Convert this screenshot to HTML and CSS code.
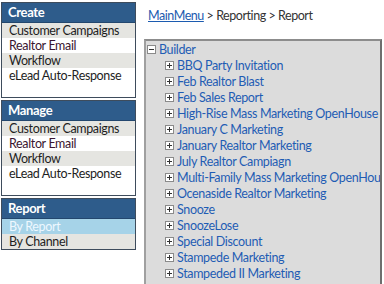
FILE: index.html
```html
<!DOCTYPE html>
<html lang="en">
<head>
  <meta charset="UTF-8">
  <title>Report</title>
  <link rel="stylesheet" href="styles.css">
</head>
<body>
  <div class="page">
    <div class="sidebar">
      <div class="box">
        <div class="box-head">Create</div>
        <div class="row alt">Customer Campaigns</div>
        <div class="row visited">Realtor Email</div>
        <div class="row alt">Workflow</div>
        <div class="row">eLead Auto-Response</div>
      </div>
      <div class="box">
        <div class="box-head">Manage</div>
        <div class="row alt">Customer Campaigns</div>
        <div class="row visited">Realtor Email</div>
        <div class="row alt">Workflow</div>
        <div class="row">eLead Auto-Response</div>
      </div>
      <div class="box short">
        <div class="box-head">Report</div>
        <div class="row selected">By Report</div>
        <div class="row alt">By Channel</div>
      </div>
    </div>

    <div class="main">
      <div class="crumbs"><a href="#">MainMenu</a> &gt; Reporting &gt; Report</div>
      <div class="tree">
        <div class="node root"><svg class="tog" viewBox="0 0 9 9"><rect x="0.5" y="0.5" width="8" height="8" fill="#fff" stroke="#8a8a8a"/><path d="M2 4.5h5" stroke="#333"/></svg>Builder</div>
        <div class="node"><svg class="tog" viewBox="0 0 9 9"><rect x="0.5" y="0.5" width="8" height="8" fill="#fff" stroke="#8a8a8a"/><path d="M2 4.5h5M4.5 2v5" stroke="#333"/></svg>BBQ Party Invitation</div>
        <div class="node"><svg class="tog" viewBox="0 0 9 9"><rect x="0.5" y="0.5" width="8" height="8" fill="#fff" stroke="#8a8a8a"/><path d="M2 4.5h5M4.5 2v5" stroke="#333"/></svg>Feb Realtor Blast</div>
        <div class="node"><svg class="tog" viewBox="0 0 9 9"><rect x="0.5" y="0.5" width="8" height="8" fill="#fff" stroke="#8a8a8a"/><path d="M2 4.5h5M4.5 2v5" stroke="#333"/></svg>Feb Sales Report</div>
        <div class="node"><svg class="tog" viewBox="0 0 9 9"><rect x="0.5" y="0.5" width="8" height="8" fill="#fff" stroke="#8a8a8a"/><path d="M2 4.5h5M4.5 2v5" stroke="#333"/></svg>High-Rise Mass Marketing OpenHouse</div>
        <div class="node"><svg class="tog" viewBox="0 0 9 9"><rect x="0.5" y="0.5" width="8" height="8" fill="#fff" stroke="#8a8a8a"/><path d="M2 4.5h5M4.5 2v5" stroke="#333"/></svg>January C Marketing</div>
        <div class="node"><svg class="tog" viewBox="0 0 9 9"><rect x="0.5" y="0.5" width="8" height="8" fill="#fff" stroke="#8a8a8a"/><path d="M2 4.5h5M4.5 2v5" stroke="#333"/></svg>January Realtor Marketing</div>
        <div class="node"><svg class="tog" viewBox="0 0 9 9"><rect x="0.5" y="0.5" width="8" height="8" fill="#fff" stroke="#8a8a8a"/><path d="M2 4.5h5M4.5 2v5" stroke="#333"/></svg>July Realtor Campiagn</div>
        <div class="node"><svg class="tog" viewBox="0 0 9 9"><rect x="0.5" y="0.5" width="8" height="8" fill="#fff" stroke="#8a8a8a"/><path d="M2 4.5h5M4.5 2v5" stroke="#333"/></svg>Multi-Family Mass Marketing OpenHouse</div>
        <div class="node"><svg class="tog" viewBox="0 0 9 9"><rect x="0.5" y="0.5" width="8" height="8" fill="#fff" stroke="#8a8a8a"/><path d="M2 4.5h5M4.5 2v5" stroke="#333"/></svg>Ocenaside Realtor Marketing</div>
        <div class="node"><svg class="tog" viewBox="0 0 9 9"><rect x="0.5" y="0.5" width="8" height="8" fill="#fff" stroke="#8a8a8a"/><path d="M2 4.5h5M4.5 2v5" stroke="#333"/></svg>Snooze</div>
        <div class="node"><svg class="tog" viewBox="0 0 9 9"><rect x="0.5" y="0.5" width="8" height="8" fill="#fff" stroke="#8a8a8a"/><path d="M2 4.5h5M4.5 2v5" stroke="#333"/></svg>SnoozeLose</div>
        <div class="node"><svg class="tog" viewBox="0 0 9 9"><rect x="0.5" y="0.5" width="8" height="8" fill="#fff" stroke="#8a8a8a"/><path d="M2 4.5h5M4.5 2v5" stroke="#333"/></svg>Special Discount</div>
        <div class="node"><svg class="tog" viewBox="0 0 9 9"><rect x="0.5" y="0.5" width="8" height="8" fill="#fff" stroke="#8a8a8a"/><path d="M2 4.5h5M4.5 2v5" stroke="#333"/></svg>Stampede Marketing</div>
        <div class="node"><svg class="tog" viewBox="0 0 9 9"><rect x="0.5" y="0.5" width="8" height="8" fill="#fff" stroke="#8a8a8a"/><path d="M2 4.5h5M4.5 2v5" stroke="#333"/></svg>Stampeded II Marketing</div>
      </div>
    </div>
  </div>
</body>
</html>
```

FILE: styles.css
```css
* {
  box-sizing: border-box;
}

body {
  margin: 0;
  font-family: Lato, "Open Sans", sans-serif;
  font-size: 12.5px;
  letter-spacing: -0.35px;
  background: white;
  overflow: hidden;
}

.page {
  display: flex;
  align-items: flex-start;
  padding: 2px 0 0 1px;
  gap: 8px;
}

.sidebar {
  width: 135px;
  display: flex;
  flex-direction: column;
  gap: 2px;
}

.box {
  border: 1px solid #3e4c5c;
  background: white;
  height: 96px;
}

.box.short {
  height: 52px;
}

.box-head {
  height: 20px;
  line-height: 19px;
  padding-left: 6px;
  background: #2e5c8b;
  border-bottom: 1px solid #23476e;
  color: white;
  font-weight: bold;
  font-size: 13px;
}

.row {
  height: 15px;
  line-height: 15px;
  padding-left: 7px;
  color: #1e1e1e;
  white-space: nowrap;
}

.row.alt {
  background: #e5e5e1;
}

.row.visited {
  color: #3a1630;
}

.row.selected {
  background: #a6d3e8;
  color: #eef8ff;
}

.main {
  flex: 1;
  min-width: 0;
}

.crumbs {
  height: 37px;
  padding: 6px 0 0 4px;
  color: #333;
  font-size: 12.5px;
  letter-spacing: -0.45px;
}

.crumbs a {
  color: #1c5bb0;
}

.tree {
  background: #dcdcdc;
  border-top: 2px solid #8c8c8c;
  border-left: 2px solid #a0a0a0;
  border-right: 2px solid #6e6e6e;
  margin-right: 2px;
  height: 260px;
  padding: 0 0 0 1px;
  overflow: hidden;
}

.node {
  display: flex;
  align-items: center;
  height: 16px;
  padding-left: 18px;
  color: #1f5cb4;
  white-space: nowrap;
}

.node.root {
  padding-left: 0;
}

.tog {
  width: 9px;
  height: 9px;
  margin-right: 3px;
  flex: none;
}
```
